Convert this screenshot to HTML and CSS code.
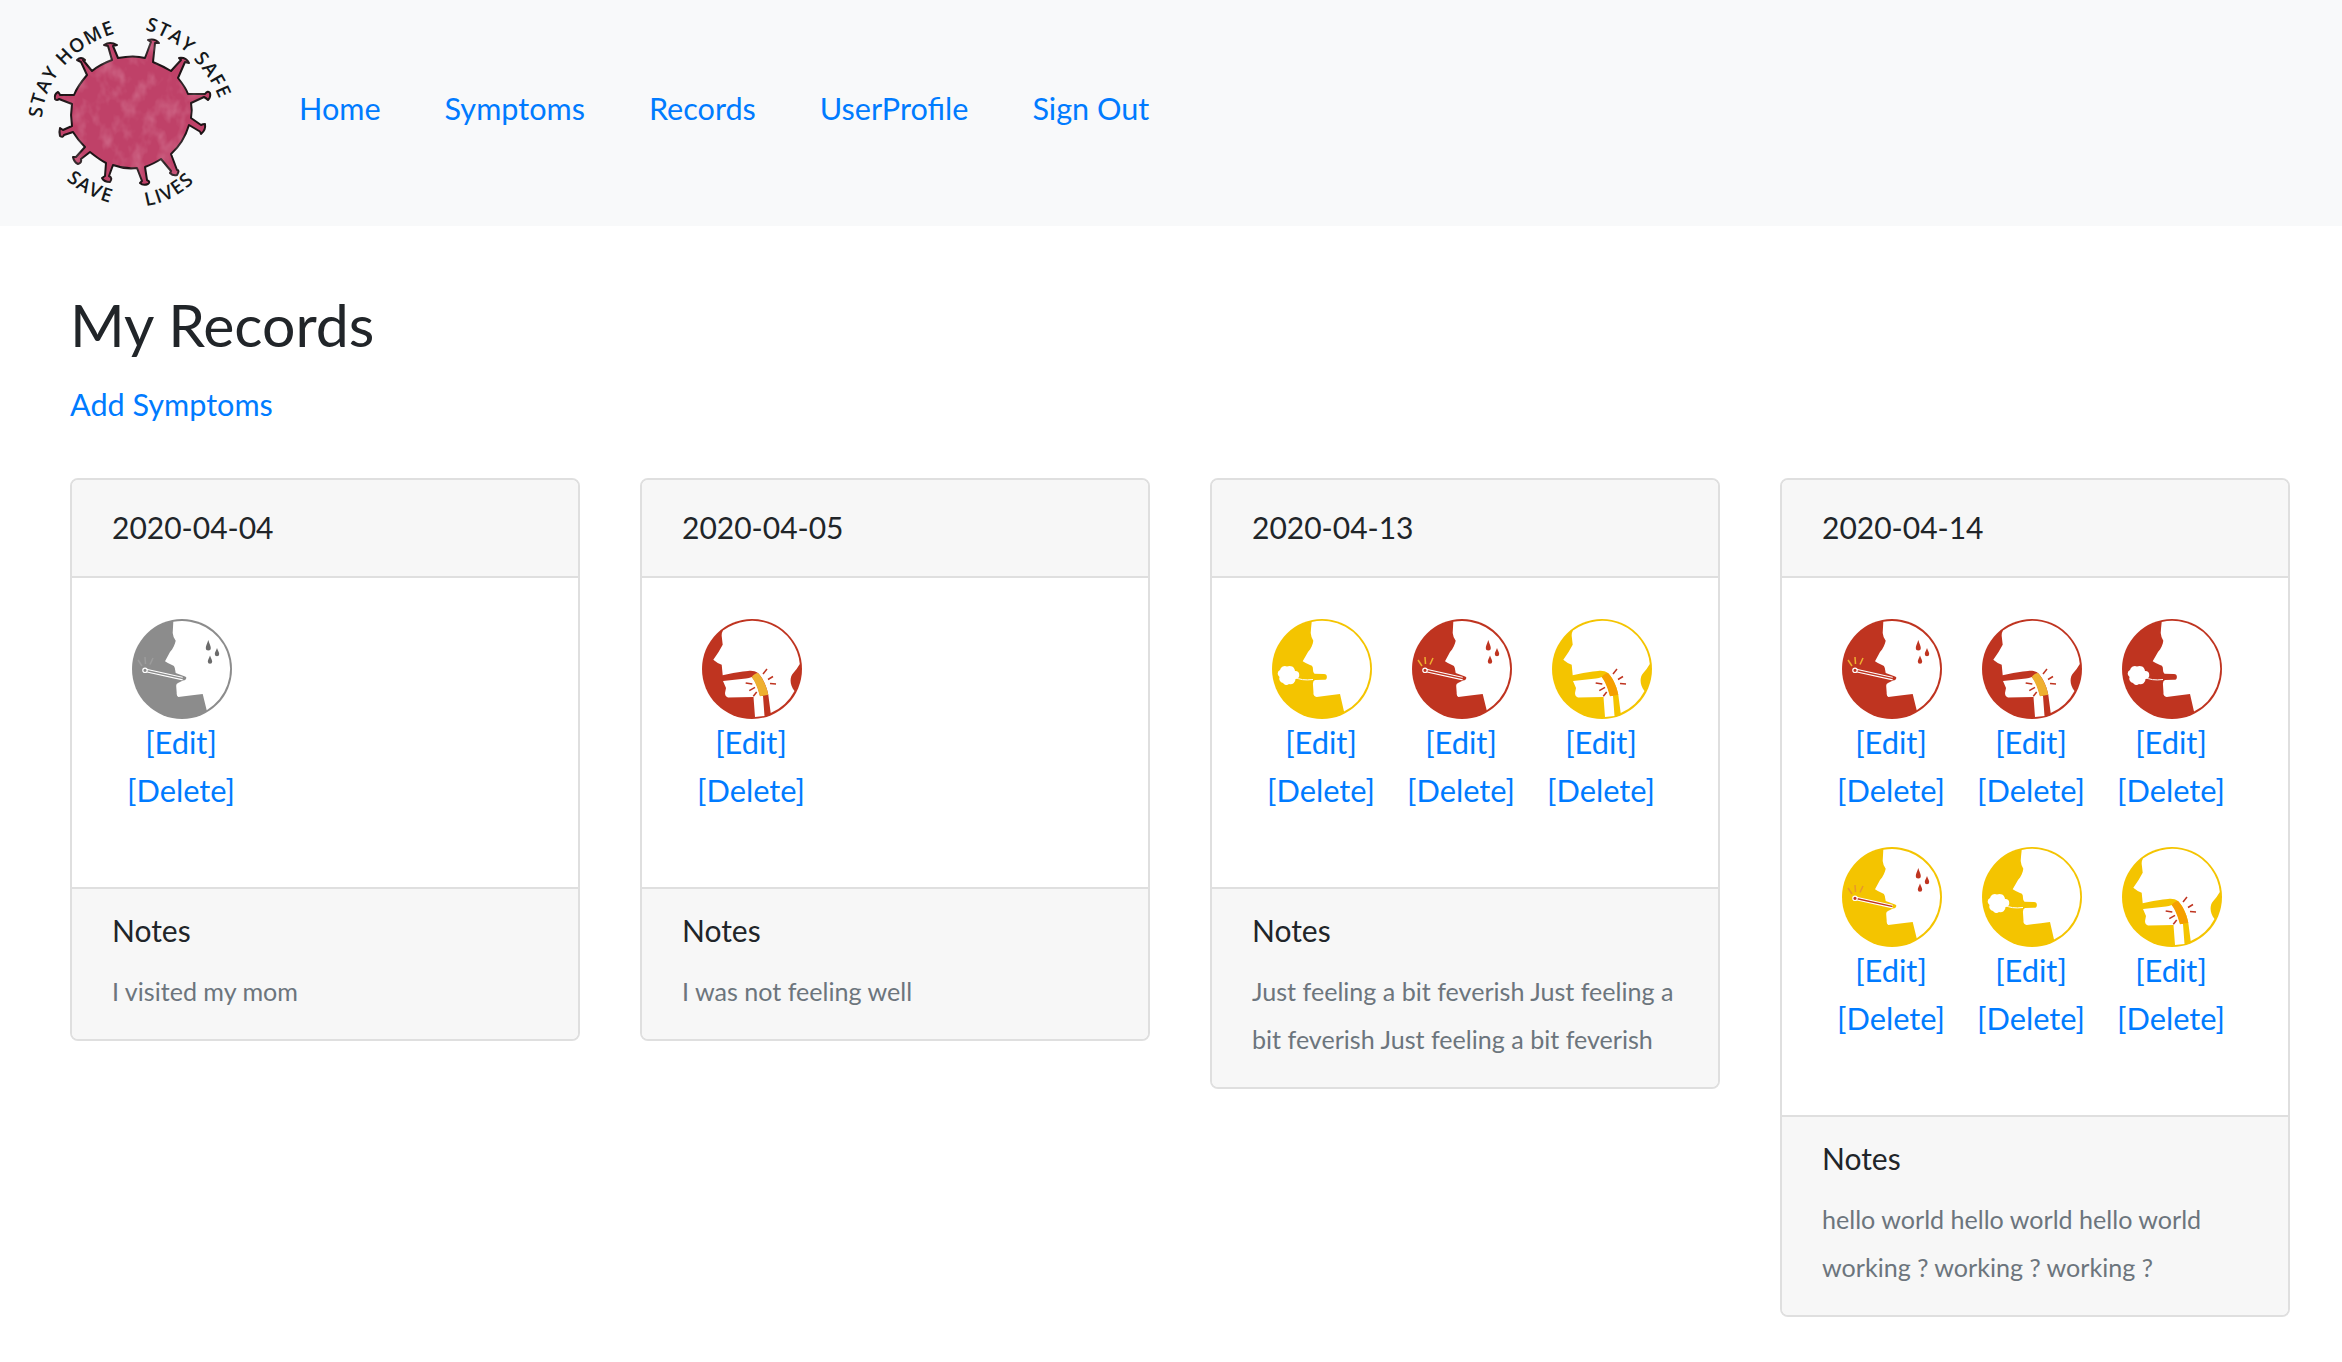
FILE: index.html
```html
<!DOCTYPE html>
<html lang="en">
	<head>
		<meta charset="UTF-8">
		<title>My Records</title>
		<link rel="stylesheet" href="styles.css">
	</head>
	<body>
		<svg class="sprites" width="0" height="0">
			<defs>
				<symbol id="fever" viewBox="0 0 100 100">
					<circle class="ic-bg" cx="50" cy="50" r="50"/>
					<path class="ic-white" d="M41.3 2.8 A48 48 0 0 1 74.7 91.2 L70.7 75 C62 76 54 77 46.3 78 Q44.4 77 44.7 74 L44.2 67 Q44 65 46 64 L54 60 Q55 58 53 57.5 L43.7 54 L42.8 49 Q42.5 46.5 40 46 Q36 44.5 33 42.3 L38 33 C41 30 43 25 43.7 21.7 Q41 18 40.7 14 Q41 9 41.3 2.8 Z"/>
					<line class="ic-therm-o" x1="13" y1="51.3" x2="50" y2="59.4"/>
					<line class="ic-therm-i" x1="13" y1="51.3" x2="50" y2="59.4"/>
					<circle class="ic-bulb" cx="13" cy="51.3" r="2.2"/>
					<circle class="ic-tip" cx="52" cy="59.6" r="1.8"/>
					<g class="ic-rays">
						<line x1="6" y1="41" x2="10" y2="47"/>
						<line x1="13" y1="38" x2="13.5" y2="45"/>
						<line x1="21" y1="39" x2="18" y2="45.5"/>
					</g>
					<g class="ic-drops">
						<path d="M76.3 21 C75 25 73.8 27 73.8 29 A2.5 2.5 0 0 0 78.8 29 C78.8 27 77.5 25 76.3 21 Z"/>
						<path d="M85 29 C84 32 82.8 33.5 82.8 35 A2.2 2.2 0 0 0 87.2 35 C87.2 33.5 86 32 85 29 Z"/>
						<path d="M78 36.5 C77 39.5 75.8 41 75.8 42.6 A2.2 2.2 0 0 0 80.2 42.6 C80.2 41 79 39.5 78 36.5 Z"/>
					</g>
				</symbol>
				<symbol id="cough" viewBox="0 0 100 100">
					<circle class="ic-bg" cx="50" cy="50" r="50"/>
					<path class="ic-white" d="M39.7 3 A48 48 0 0 1 72 92.6 L68 75 C60 76 52 77 44.7 78 Q41 77 41.5 74 L41 66 Q40.5 62 43 61 L52 60.8 A2.8 2.8 0 0 0 52 55 L42.5 54.8 Q41 54 41 51 L40.8 48.5 Q40.5 46 38 46 Q34 44.5 30.7 42.3 L36 33 C39 30 41 25 41.3 21.7 Q39 18 38.7 14 Q39 9 39.7 3 Z"/>
					<path class="ic-puff" d="M8 51 A5 5 0 0 1 15 47.5 A5.5 5.5 0 0 1 23 52 A4 4 0 0 1 23.5 60 A5 5 0 0 1 17 65 A4 4 0 0 1 11 64 A4.5 4.5 0 0 1 7.5 58 A4 4 0 0 1 8 51 Z"/>
					<path class="ic-breath" d="M23 58 Q29 62 41 60.5"/>
				</symbol>
				<symbol id="throat" viewBox="0 0 100 100">
					<circle class="ic-bg" cx="50" cy="50" r="50"/>
					<path class="ic-white" d="M21 11.6 Q19.5 14 19.7 17 L20.7 25.7 Q17 33 11.3 40.7 Q15 44 19.7 45.7 L20.7 56.3 C30 54 40 52.5 46 52 C50 51.5 53 52 56 54 C60 58 64.5 66 66.3 75.7 L68.7 94 A48 48 0 0 0 92.5 72 C87.5 66 87.5 58 91.3 54 Q95 50 97.8 45 A48 48 0 0 0 21 11.6 Z"/>
					<path class="ic-white" d="M21 62 L44 59.5 Q47 59 49.7 58 C53 62 55.5 66 58 77 L61 77 L62.5 97 L53 98 L51.5 78 L26 78.5 Q23 77.5 23 74 L24 69 Z"/>
					<path class="ic-hot" d="M49.7 58 C51 56 54 54 56 54 C60 58 64.5 66 66.3 75.7 L58 77.3 C56 70 53 62 49.7 58 Z"/>
					<g class="ic-rays-hot">
						<line x1="61" y1="55" x2="65" y2="50"/>
						<line x1="66" y1="60.5" x2="71" y2="57.5"/>
						<line x1="68" y1="64.5" x2="74" y2="65"/>
						<line x1="43.7" y1="64" x2="50.3" y2="65"/>
						<line x1="47.3" y1="71.7" x2="53" y2="68.3"/>
						<line x1="51.3" y1="77.3" x2="54.7" y2="73"/>
					</g>
				</symbol>
			</defs>
		</svg>

		<header class="navbar">
			<svg class="logo" viewBox="28 14 208 198" width="208" height="198">
				<defs>
					<filter id="mottle" x="0" y="0" width="100%" height="100%">
						<feTurbulence type="fractalNoise" baseFrequency="0.07 0.05" numOctaves="3" seed="7"/>
						<feColorMatrix values="0 0 0 0 1  0 0 0 0 0.75  0 0 0 0 0.82  0.5 0 0 0 -0.22"/>
						<feComposite in2="SourceGraphic" operator="in"/>
					</filter>
					<path id="arc-home" d="M42 118 C44 82 74 42 124 31"/>
					<path id="arc-safe" d="M145 30 C170 36 208 60 224 112"/>
					<path id="arc-save" d="M66 180 C80 192 96 200 122 206"/>
					<path id="arc-lives" d="M146 206 C165 203 183 195 204 172"/>
				</defs>
				<path id="germ" class="germ" d="M112 60 L108 46 L104 45 Q110 41 117 45 L113 46 L118 58 C128 56 138 56 145 58 L151 42 L148 40 Q155 38 159 43 L155 43 L153 62 C160 65 166 68 171 71 L181 60 L179 58 Q186 57 189 63 L185 62 L178 78 C182 83 186 88 188 94 L205 94 Q208 90 210 93 Q211 97 208 100 Q206 98 204 97 L191 103 C192 108 192 113 191 118 L201 125 Q203 124 205 124 Q206 130 201 134 Q200 131 199 131 L189 125 C186 135 181 145 171 154 L177 170 Q180 170 177 175 Q173 176 170 173 Q171 172 171 171 L161 159 C155 163 150 165 145 167 L147 180 Q151 182 148 184 Q143 186 140 183 L142 181 L137 168 C129 169 121 168 113 165 L109 176 Q113 178 110 182 Q104 182 102 178 L105 176 L106 163 C100 160 95 156 90 152 L81 159 Q82 163 78 164 Q74 162 73 157 L76 157 L85 147 C80 142 76 137 73 132 L64 135 Q63 138 60 136 Q59 131 60 128 L63 130 L72 126 C71 120 71 110 72 104 L59 99 Q57 101 55 99 Q54 94 58 92 Q60 94 60 95 L74 95 C77 87 82 81 87 75 L81 62 L77 60 Q81 56 85 60 L83 60 L92 71 C98 66 104 63 112 60 Z"/>
				<use href="#germ" class="germ-tex" filter="url(#mottle)"/>
				<text class="logo-text"><textPath href="#arc-home">STAY HOME</textPath></text>
				<text class="logo-text"><textPath href="#arc-safe">STAY SAFE</textPath></text>
				<text class="logo-text"><textPath href="#arc-save">SAVE</textPath></text>
				<text class="logo-text"><textPath href="#arc-lives">LIVES</textPath></text>
			</svg>
			<nav class="nav-links">
				<a href="#">Home</a>
				<a href="#">Symptoms</a>
				<a href="#">Records</a>
				<a href="#">UserProfile</a>
				<a href="#">Sign Out</a>
			</nav>
		</header>

		<main class="page">
			<h1 class="title">My Records</h1>
			<a class="add-link" href="#">Add Symptoms</a>

			<div class="records">
				<section class="card">
					<div class="card-head">2020-04-04</div>
					<div class="card-body">
						<div class="symptom sev-none">
							<svg class="icon"><use href="#fever"/></svg>
							<a href="#">[Edit]</a>
							<a href="#">[Delete]</a>
						</div>
					</div>
					<div class="card-foot">
						<div class="notes-title">Notes</div>
						<small class="notes">I visited my mom</small>
					</div>
				</section>

				<section class="card">
					<div class="card-head">2020-04-05</div>
					<div class="card-body">
						<div class="symptom sev-high">
							<svg class="icon"><use href="#throat"/></svg>
							<a href="#">[Edit]</a>
							<a href="#">[Delete]</a>
						</div>
					</div>
					<div class="card-foot">
						<div class="notes-title">Notes</div>
						<small class="notes">I was not feeling well</small>
					</div>
				</section>

				<section class="card">
					<div class="card-head">2020-04-13</div>
					<div class="card-body">
						<div class="symptom sev-mid">
							<svg class="icon"><use href="#cough"/></svg>
							<a href="#">[Edit]</a>
							<a href="#">[Delete]</a>
						</div>
						<div class="symptom sev-high">
							<svg class="icon"><use href="#fever"/></svg>
							<a href="#">[Edit]</a>
							<a href="#">[Delete]</a>
						</div>
						<div class="symptom sev-mid">
							<svg class="icon"><use href="#throat"/></svg>
							<a href="#">[Edit]</a>
							<a href="#">[Delete]</a>
						</div>
					</div>
					<div class="card-foot">
						<div class="notes-title">Notes</div>
						<small class="notes">Just feeling a bit feverish Just feeling a bit feverish Just feeling a bit feverish</small>
					</div>
				</section>

				<section class="card">
					<div class="card-head">2020-04-14</div>
					<div class="card-body">
						<div class="symptom sev-high">
							<svg class="icon"><use href="#fever"/></svg>
							<a href="#">[Edit]</a>
							<a href="#">[Delete]</a>
						</div>
						<div class="symptom sev-high">
							<svg class="icon"><use href="#throat"/></svg>
							<a href="#">[Edit]</a>
							<a href="#">[Delete]</a>
						</div>
						<div class="symptom sev-high">
							<svg class="icon"><use href="#cough"/></svg>
							<a href="#">[Edit]</a>
							<a href="#">[Delete]</a>
						</div>
						<div class="symptom sev-mid">
							<svg class="icon"><use href="#fever"/></svg>
							<a href="#">[Edit]</a>
							<a href="#">[Delete]</a>
						</div>
						<div class="symptom sev-mid">
							<svg class="icon"><use href="#cough"/></svg>
							<a href="#">[Edit]</a>
							<a href="#">[Delete]</a>
						</div>
						<div class="symptom sev-mid">
							<svg class="icon"><use href="#throat"/></svg>
							<a href="#">[Edit]</a>
							<a href="#">[Delete]</a>
						</div>
					</div>
					<div class="card-foot">
						<div class="notes-title">Notes</div>
						<small class="notes">hello world hello world hello world working ? working ? working ?</small>
					</div>
				</section>
			</div>
		</main>
	</body>
</html>
```

FILE: styles.css
```css
* {
	box-sizing: border-box;
}

body {
	margin:      0;
	background:  #fff;
	color:       #212529;
	font-family: Lato, "Open Sans", sans-serif;
	font-size:   30px;
	line-height: 48px;
}

a {
	color:           #007bff;
	text-decoration: none;
}

.sprites {
	position: absolute;
}

.navbar {
	display:     flex;
	align-items: center;
	height:      226px;
	padding:     0 0 0 28px;
	background:  #f8f9fa;
}

.logo {
	display: block;
}

.germ {
	fill:            #bf4168;
	stroke:          #1d1416;
	stroke-width:    2px;
	stroke-linejoin: round;
}

.germ-tex {
	stroke: none;
}

.logo-text {
	font-family:    "Open Sans", sans-serif;
	font-size:      19px;
	font-weight:    600;
	letter-spacing: 1.4px;
	fill:           #15191c;
}

.nav-links {
	display:        flex;
	gap:            64px;
	margin-left:    63px;
	padding-bottom: 8px;
	font-size:      30.6px;
}

.page {
	padding: 52px 52px 46px 70px;
}

.title {
	margin:      0 0 9px;
	font-size:   59px;
	font-weight: 400;
	line-height: 94px;
}

.add-link {
	display:   block;
	font-size: 30.6px;
}

.records {
	display:               grid;
	grid-template-columns: repeat(4, 510px);
	gap:                   60px;
	align-items:           start;
	margin-top:            49px;
}

.card {
	border:        2px solid #dfdfdf;
	border-radius: 8px;
	overflow:      hidden;
}

.card-head {
	padding:       23px 40px 25px;
	background:    #f7f7f7;
	border-bottom: 2px solid #dfdfdf;
}

.card-body {
	display:               grid;
	grid-template-columns: repeat(3, 140px);
	padding:               41px 40px 40px;
}

.card-foot {
	padding:    22px 40px 24px;
	background: #f7f7f7;
	border-top: 2px solid #dfdfdf;
}

.notes-title {
	margin-bottom: 18px;
	line-height:   38px;
}

.notes {
	display:   block;
	color:     #6c757d;
	font-size: 25.1px;
}

.symptom {
	display:        flex;
	flex-direction: column;
	align-items:    center;
	height:         228px;
	font-size:      30.8px;
	text-align:     center;
}

.symptom a {
	margin-right: 2px;
}

.icon {
	display: block;
	width:   100px;
	height:  100px;
}

.sev-none {
	--sev:  #8c8c8c;
	--hot:  #8c8c8c;
	--mark: #6b6b6b;
	--rays: #9c9c9c;
	--tip:  #8c8c8c;
}

.sev-high {
	--sev:  #bf3420;
	--hot:  #eeb030;
	--mark: #bf3420;
	--rays: #eeb030;
	--tip:  #bf3420;
}

.sev-mid {
	--sev:  #f4c400;
	--hot:  #f59f00;
	--mark: #bf3420;
	--rays: #e8972a;
	--tip:  #bf3420;
}

.ic-bg {
	fill: var(--sev);
}

.ic-white,
.ic-puff {
	fill: #fff;
}

.ic-hot {
	fill: var(--hot);
}

.ic-therm-o {
	stroke:         #fff;
	stroke-width:   3.6px;
	stroke-linecap: round;
}

.ic-therm-i {
	stroke:         var(--tip);
	stroke-width:   1.4px;
	stroke-linecap: round;
}

.ic-bulb {
	fill:         var(--tip);
	stroke:       #fff;
	stroke-width: 1.2px;
}

.ic-tip {
	fill: var(--sev);
}

.ic-rays line {
	stroke:       var(--rays);
	stroke-width: 1.5px;
}

.ic-rays-hot line {
	stroke:       var(--mark);
	stroke-width: 1.5px;
}

.ic-drops {
	fill: var(--mark);
}

.ic-breath {
	fill:         none;
	stroke:       #fff;
	stroke-width: 1px;
}
```
